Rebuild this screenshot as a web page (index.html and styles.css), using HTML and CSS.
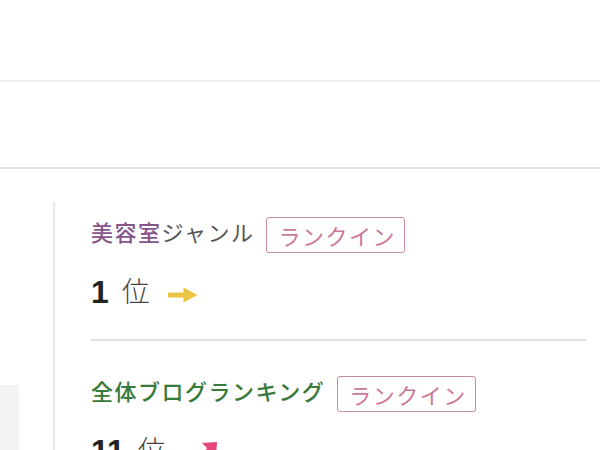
FILE: index.html
```html
<!DOCTYPE html>
<html lang="ja">
<head>
<meta charset="utf-8">
<link rel="stylesheet" href="styles.css">
</head>
<body>
  <header class="top-bar"></header>
  <nav class="sub-bar"></nav>
  <main class="main">
    <aside class="side">
      <div class="side-box"></div>
    </aside>
    <section class="rank-list">
      <div class="rank-item">
        <div class="rank-title">
          <span class="genre"><span class="genre-name purple">美容室</span>ジャンル</span>
          <span class="badge">ランクイン</span>
        </div>
        <div class="rank-pos">
          <span class="num">1</span>
          <span class="unit">位</span>
          <svg class="arrow" width="30" height="16" viewBox="0 0 30 16">
            <rect x="0" y="5.5" width="20" height="5" fill="#ebc444"/>
            <polygon points="15.5,0.5 29.5,8 15.5,15.5" fill="#ebc444"/>
          </svg>
        </div>
      </div>
      <div class="rank-item">
        <div class="rank-title">
          <span class="genre"><span class="genre-name green">全体ブログランキング</span></span>
          <span class="badge">ランクイン</span>
        </div>
        <div class="rank-pos">
          <span class="num">11</span>
          <span class="unit">位</span>
          <svg class="arrow up" width="30" height="30" viewBox="0 0 30 30">
            <line x1="5" y1="25" x2="22" y2="8" stroke="#e5457c" stroke-width="5"/>
            <polygon points="12,4 27,3 26,18" fill="#e5457c"/>
          </svg>
        </div>
      </div>
    </section>
  </main>
</body>
</html>
```
FILE: styles.css
```css
* { box-sizing: border-box; }
html, body { margin: 0; padding: 0; background: #fff; }
body {
  width: 600px;
  height: 450px;
  overflow: hidden;
  font-family: "Noto Sans CJK JP", "Noto Sans", sans-serif;
}
.top-bar {
  height: 82px;
  border-bottom: 2px solid #efefef;
}
.sub-bar {
  height: 87px;
  border-bottom: 2px solid #e3e3e3;
}
.main {
  display: flex;
  padding-top: 33px;
  min-height: 300px;
}
.side {
  width: 53px;
  flex: none;
  padding-top: 183px;
}
.side-box {
  width: 19px;
  height: 120px;
  background: #f3f3f3;
}
.rank-list {
  flex: 1;
  border-left: 2px solid #e9e9e9;
  padding: 15px 14px 0 36px;
}
.rank-item {
  padding-bottom: 29px;
  border-bottom: 2px solid #e2e2e2;
}
.rank-item + .rank-item {
  padding-top: 35px;
  border-bottom: none;
}
.rank-title {
  display: flex;
  align-items: flex-start;
  gap: 12px;
}
.genre {
  font-size: 22px;
  line-height: 28px;
  letter-spacing: 1.5px;
  color: #555;
}
.genre-name { font-weight: 500; }
.purple { color: #87558b; }
.green { color: #377a3a; }
.badge {
  display: inline-block;
  height: 36px;
  padding: 0 8px 0 11px;
  border: 1px solid #c98aa3;
  border-radius: 3px;
  font-size: 22px;
  line-height: 34px;
  letter-spacing: 1.5px;
  color: #cc7897;
}
.rank-pos {
  display: flex;
  align-items: center;
  height: 36px;
  margin-top: 21px;
}
.num {
  font-family: "Liberation Sans", Arial, sans-serif;
  font-weight: 700;
  font-size: 32px;
  line-height: 36px;
  color: #222;
}
.unit {
  font-size: 28px;
  font-weight: 300;
  line-height: 36px;
  color: #444;
  margin-left: 13px;
  margin-bottom: 4px;
}
.arrow {
  margin-left: 18px;
  margin-top: 6px;
}
.arrow.up {
  margin-top: 0;
  align-self: flex-end;
  margin-left: 24px;
}
```
